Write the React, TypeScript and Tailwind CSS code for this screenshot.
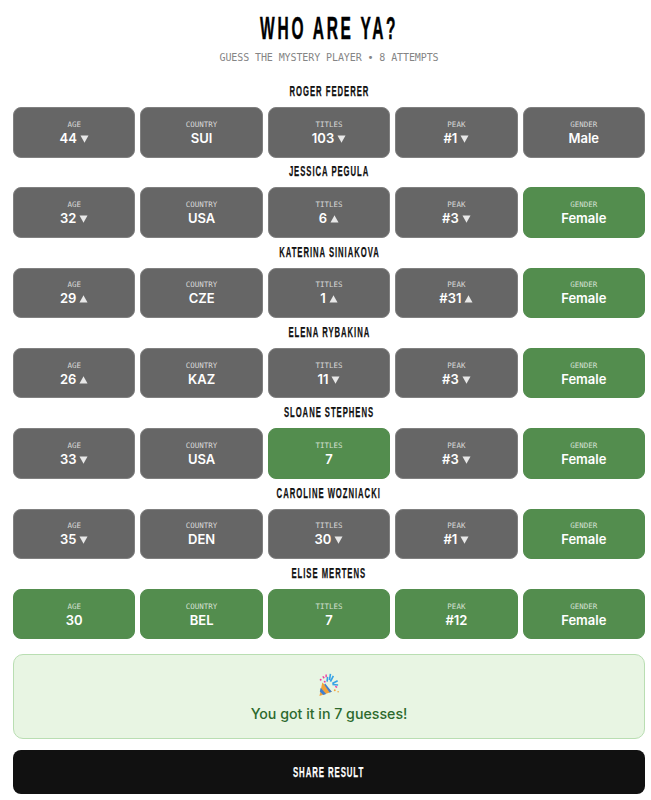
import React from "react";

type Cell = { label: string; value: string; arrow?: "up" | "down"; hit?: boolean };
type Guess = { name: string; cells: Cell[] };

const row = (
  name: string,
  age: [string, "up" | "down" | null],
  country: string,
  titles: [string, "up" | "down" | null],
  peak: [string, "up" | "down" | null],
  gender: string,
  hits: string[] = []
): Guess => ({
  name,
  cells: [
    { label: "AGE", value: age[0], arrow: age[1] ?? undefined, hit: hits.includes("age") },
    { label: "COUNTRY", value: country, hit: hits.includes("country") },
    { label: "TITLES", value: titles[0], arrow: titles[1] ?? undefined, hit: hits.includes("titles") },
    { label: "PEAK", value: peak[0], arrow: peak[1] ?? undefined, hit: hits.includes("peak") },
    { label: "GENDER", value: gender, hit: hits.includes("gender") },
  ],
});

const guesses: Guess[] = [
  row("ROGER FEDERER", ["44", "down"], "SUI", ["103", "down"], ["#1", "down"], "Male"),
  row("JESSICA PEGULA", ["32", "down"], "USA", ["6", "up"], ["#3", "down"], "Female", ["gender"]),
  row("KATERINA SINIAKOVA", ["29", "up"], "CZE", ["1", "up"], ["#31", "up"], "Female", ["gender"]),
  row("ELENA RYBAKINA", ["26", "up"], "KAZ", ["11", "down"], ["#3", "down"], "Female", ["gender"]),
  row("SLOANE STEPHENS", ["33", "down"], "USA", ["7", null], ["#3", "down"], "Female", ["titles", "gender"]),
  row("CAROLINE WOZNIACKI", ["35", "down"], "DEN", ["30", "down"], ["#1", "down"], "Female", ["gender"]),
  row("ELISE MERTENS", ["30", null], "BEL", ["7", null], ["#12", null], "Female", ["age", "country", "titles", "peak", "gender"]),
];

const Arrow = ({ dir }: { dir: "up" | "down" }) => (
  <svg width="9" height="8" viewBox="0 0 9 8" className="ml-[3px] mt-[2px] shrink-0">
    {dir === "down" ? <path d="M0.5 0.5h8L4.5 7.8z" fill="#e8e8e8" /> : <path d="M4.5 0.2l4 7.3h-8z" fill="#e8e8e8" />}
  </svg>
);

const Tile = ({ cell }: { cell: Cell }) => (
  <div
    className={`h-[50.5px] rounded-[8px] border flex flex-col items-center justify-center ${
      cell.hit ? "bg-[#538d4e] border-[#538d4e]" : "bg-[#666666] border-[#808080]"
    }`}
  >
    <div className="font-['DejaVu_Sans_Mono',monospace] text-[7.5px] leading-[11px] text-white/75">{cell.label}</div>
    <div className="flex items-center justify-center font-['Inter',sans-serif] text-[13px] leading-[16px] font-semibold text-white">
      {cell.value}
      {cell.arrow && <Arrow dir={cell.arrow} />}
    </div>
  </div>
);

const Popper = () => (
  <svg width="23" height="23" viewBox="0 0 24 24">
    <path d="M4.5 10L14.5 19.5L1.5 24z" fill="#f2a33a" />
    <path d="M2.8 15.5L8.5 22l-3 1-3.6-3.6z" fill="#3f7fd0" />
    <path d="M6.5 12L12 20.4l2.5-.9-7-8.5z" fill="#3f7fd0" />
    <path d="M10 4L9.5 9M13 1l-1 6.5M16 3l-3 6M20.5 8l-5.5 3M21 12.5l-6-.5" stroke="#36a3e6" strokeWidth="1.7" fill="none" />
    <path d="M8.5 1.5v3M5 3.5l1.5 2M18 14l2 1" stroke="#ee3ea0" strokeWidth="1.5" fill="none" />
    <circle cx="2.8" cy="7" r="1" fill="#ee3ea0" />
    <circle cx="7" cy="9" r="1" fill="#ee3ea0" />
    <circle cx="17.5" cy="18" r="1" fill="#f2a33a" />
    <circle cx="21" cy="19.5" r=".8" fill="#f2a33a" />
  </svg>
);

export default function App() {
  return (
    <div className="w-[651px] h-[800px] overflow-hidden bg-white pl-[13px] pr-[6px] pt-[11px]">
      <div className="text-center font-['Liberation_Sans',sans-serif] text-[31px] leading-[36px] font-bold text-black">
        <span className="inline-block scale-x-[0.5] tracking-[5.5px] [-webkit-text-stroke:0.5px_black]">WHO ARE YA?</span>
      </div>
      <div className="mt-[4px] text-center font-['DejaVu_Sans_Mono',monospace] text-[10px] leading-[14px] tracking-[-0.1px] text-[#858585]">
        GUESS THE MYSTERY PLAYER • 8 ATTEMPTS
      </div>
      <div className="mt-[16px] flex flex-col">
        {guesses.map((g) => (
          <div key={g.name} className="h-[80.33px]">
            <div className="text-center font-['Liberation_Sans',sans-serif] text-[14px] leading-[20px] font-bold text-[#111111]">
              <span className="inline-block scale-x-[0.55] tracking-[1.75px] [-webkit-text-stroke:0.25px_#111111]">{g.name}</span>
            </div>
            <div className="mt-[6px] grid grid-cols-5 gap-[5px]">
              {g.cells.map((c) => (
                <Tile key={c.label} cell={c} />
              ))}
            </div>
          </div>
        ))}
      </div>
      <div className="mt-[11px] h-[85px] rounded-[10px] border-[1.5px] border-[#b9deb2] bg-[#e8f5e3] flex flex-col items-center pt-[18px]">
        <Popper />
        <div className="mt-[8px] font-['Inter',sans-serif] text-[14.2px] leading-[20px] font-medium text-[#2d6a2d]">
          You got it in 7 guesses!
        </div>
      </div>
      <button className="mt-[11px] w-full h-[44px] rounded-[8px] bg-[#111111] flex items-center justify-center font-['Liberation_Sans',sans-serif] text-[14px] font-bold text-white">
        <span className="inline-block scale-x-[0.56] tracking-[1.6px] [-webkit-text-stroke:0.25px_white]">SHARE RESULT</span>
      </button>
    </div>
  );
}
